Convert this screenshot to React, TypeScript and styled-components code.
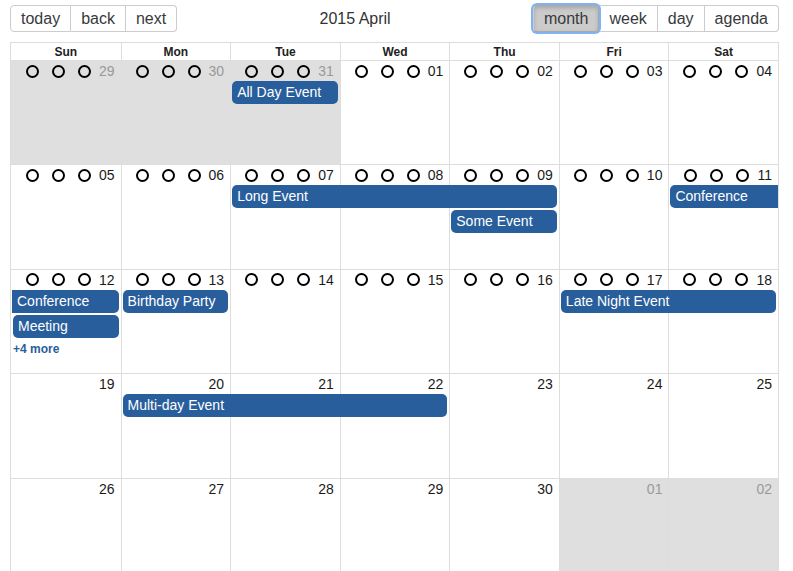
import React from 'react';
import styled, { createGlobalStyle, css } from 'styled-components';

const GlobalStyle = createGlobalStyle`
  html, body {
    margin: 0;
    padding: 0;
    overflow: hidden;
    background: #fff;
  }
  body {
    font-family: "Liberation Sans", Arial, Helvetica, sans-serif;
    color: #373a3c;
  }
  * {
    box-sizing: border-box;
  }
`;

const EVENT_BLUE = '#285e9b';

const StyledPage = styled.div`
  padding: 5px 14px 0 10px;
`;

const StyledToolbar = styled.div`
  display: flex;
  align-items: center;
  margin-bottom: 10px;
`;

const StyledButtonGroup = styled.div`
  display: inline-flex;
`;

const StyledToolbarButton = styled.button<{ $active?: boolean }>`
  height: 27px;
  padding: 0 10px;
  margin: 0;
  font-family: inherit;
  font-size: 16px;
  color: #373a3c;
  background: #fff;
  border: 1px solid #ccc;
  border-left: none;
  border-radius: 0;
  cursor: pointer;
  &:first-child {
    border-left: 1px solid #ccc;
    border-radius: 4px 0 0 4px;
  }
  &:last-child {
    border-radius: 0 4px 4px 0;
  }
  ${({ $active }) =>
    $active &&
    css`
      position: relative;
      z-index: 1;
      background: #cbcbcb;
      border: 1px solid #a9a9a9;
      border-radius: 4px !important;
      box-shadow: 0 0 0 2px #80b2f6, inset 0 2px 4px rgba(0, 0, 0, 0.18);
    `}
`;

const StyledTitle = styled.span`
  flex: 1;
  text-align: center;
  font-size: 16px;
  color: #333;
`;

const StyledMonth = styled.div`
  border: 1px solid #ddd;
`;

const StyledHeaderRow = styled.div`
  display: grid;
  grid-template-columns: repeat(7, 1fr);
  border-bottom: 1px solid #ddd;
`;

const StyledHeaderCell = styled.div`
  height: 17px;
  line-height: 18px;
  text-align: center;
  font-size: 12px;
  font-weight: 700;
  color: #222;
  & + & {
    border-left: 1px solid #ddd;
  }
`;

const StyledWeek = styled.div`
  display: grid;
  grid-template-columns: repeat(7, 1fr);
  grid-template-rows: 20px 25px 25px 18px 1fr;
  height: 103px;
  & + & {
    border-top: 1px solid #ddd;
    height: 104.5px;
  }
`;

const StyledDayBg = styled.div<{ $col: number; $off?: boolean }>`
  grid-row: 1 / -1;
  grid-column: ${({ $col }) => $col + 1};
  background: ${({ $off }) => ($off ? '#dfdfdf' : '#fff')};
  border-left: ${({ $col }) => ($col === 0 ? 'none' : '1px solid #ddd')};
`;

const StyledDateHeader = styled.div<{ $col: number; $off?: boolean }>`
  grid-row: 1;
  grid-column: ${({ $col }) => $col + 1};
  display: flex;
  align-items: center;
  justify-content: flex-end;
  padding-right: 6px;
  font-size: 14px;
  color: ${({ $off }) => ($off ? '#999' : '#1a1a1a')};
`;

const StyledCircles = styled.span`
  display: flex;
  gap: 13px;
  margin-right: 8px;
`;

const StyledCircle = styled.span`
  width: 13px;
  height: 13px;
  border: 2px solid #000;
  border-radius: 50%;
`;

const StyledEvent = styled.div<{
  $col: number;
  $span: number;
  $row: number;
  $prior?: boolean;
  $after?: boolean;
}>`
  grid-column: ${({ $col, $span }) => `${$col + 1} / span ${$span}`};
  grid-row: ${({ $row }) => $row + 2};
  align-self: start;
  height: 23px;
  line-height: 19px;
  padding: 2px 5px;
  margin-left: ${({ $prior }) => ($prior ? '1px' : '2px')};
  margin-right: ${({ $after }) => ($after ? '0' : '2px')};
  background: ${EVENT_BLUE};
  color: #fff;
  font-size: 14px;
  white-space: nowrap;
  overflow: hidden;
  border-radius: ${({ $prior, $after }) =>
    `${$prior ? 0 : 5}px ${$after ? 0 : 5}px ${$after ? 0 : 5}px ${$prior ? 0 : 5}px`};
`;

const StyledMore = styled.a<{ $col: number }>`
  grid-row: 4;
  grid-column: ${({ $col }) => $col + 1};
  align-self: center;
  padding-left: 2px;
  font-size: 12px;
  font-weight: 700;
  color: ${EVENT_BLUE};
  text-decoration: none;
`;

interface CalEvent {
  title: string;
  col: number;
  span: number;
  row: number;
  prior?: boolean;
  after?: boolean;
}

interface Week {
  days: number[];
  off: number[];
  circles: boolean;
  events: CalEvent[];
  more?: { col: number; count: number }[];
}

const weeks: Week[] = [
  {
    days: [29, 30, 31, 1, 2, 3, 4],
    off: [0, 1, 2],
    circles: true,
    events: [{ title: 'All Day Event', col: 2, span: 1, row: 0 }],
  },
  {
    days: [5, 6, 7, 8, 9, 10, 11],
    off: [],
    circles: true,
    events: [
      { title: 'Long Event', col: 2, span: 3, row: 0 },
      { title: 'Some Event', col: 4, span: 1, row: 1 },
      { title: 'Conference', col: 6, span: 1, row: 0, after: true },
    ],
  },
  {
    days: [12, 13, 14, 15, 16, 17, 18],
    off: [],
    circles: true,
    events: [
      { title: 'Conference', col: 0, span: 1, row: 0, prior: true },
      { title: 'Meeting', col: 0, span: 1, row: 1 },
      { title: 'Birthday Party', col: 1, span: 1, row: 0 },
      { title: 'Late Night Event', col: 5, span: 2, row: 0 },
    ],
    more: [{ col: 0, count: 4 }],
  },
  {
    days: [19, 20, 21, 22, 23, 24, 25],
    off: [],
    circles: false,
    events: [{ title: 'Multi-day Event', col: 1, span: 3, row: 0 }],
  },
  {
    days: [26, 27, 28, 29, 30, 1, 2],
    off: [5, 6],
    circles: false,
    events: [],
  },
];

const dayNames = ['Sun', 'Mon', 'Tue', 'Wed', 'Thu', 'Fri', 'Sat'];

const pad = (n: number) => (n < 10 ? `0${n}` : `${n}`);

const App: React.FC = () => (
  <>
    <GlobalStyle />
    <StyledPage>
      <StyledToolbar>
        <StyledButtonGroup>
          <StyledToolbarButton>today</StyledToolbarButton>
          <StyledToolbarButton>back</StyledToolbarButton>
          <StyledToolbarButton>next</StyledToolbarButton>
        </StyledButtonGroup>
        <StyledTitle>2015 April</StyledTitle>
        <StyledButtonGroup>
          <StyledToolbarButton $active>month</StyledToolbarButton>
          <StyledToolbarButton>week</StyledToolbarButton>
          <StyledToolbarButton>day</StyledToolbarButton>
          <StyledToolbarButton>agenda</StyledToolbarButton>
        </StyledButtonGroup>
      </StyledToolbar>
      <StyledMonth>
        <StyledHeaderRow>
          {dayNames.map((name) => (
            <StyledHeaderCell key={name}>{name}</StyledHeaderCell>
          ))}
        </StyledHeaderRow>
        {weeks.map((week, w) => (
          <StyledWeek key={w}>
            {week.days.map((d, i) => (
              <StyledDayBg key={`bg${i}`} $col={i} $off={week.off.includes(i)} />
            ))}
            {week.days.map((d, i) => (
              <StyledDateHeader key={`h${i}`} $col={i} $off={week.off.includes(i)}>
                {week.circles ? (
                  <StyledCircles>
                    <StyledCircle />
                    <StyledCircle />
                    <StyledCircle />
                  </StyledCircles>
                ) : null}
                {pad(d)}
              </StyledDateHeader>
            ))}
            {week.events.map((ev) => (
              <StyledEvent
                key={`${ev.title}${ev.col}`}
                $col={ev.col}
                $span={ev.span}
                $row={ev.row}
                $prior={ev.prior}
                $after={ev.after}
              >
                {ev.title}
              </StyledEvent>
            ))}
            {week.more?.map((m) => (
              <StyledMore key={`m${m.col}`} href="#" $col={m.col}>
                +{m.count} more
              </StyledMore>
            ))}
          </StyledWeek>
        ))}
      </StyledMonth>
    </StyledPage>
  </>
);

export default App;
